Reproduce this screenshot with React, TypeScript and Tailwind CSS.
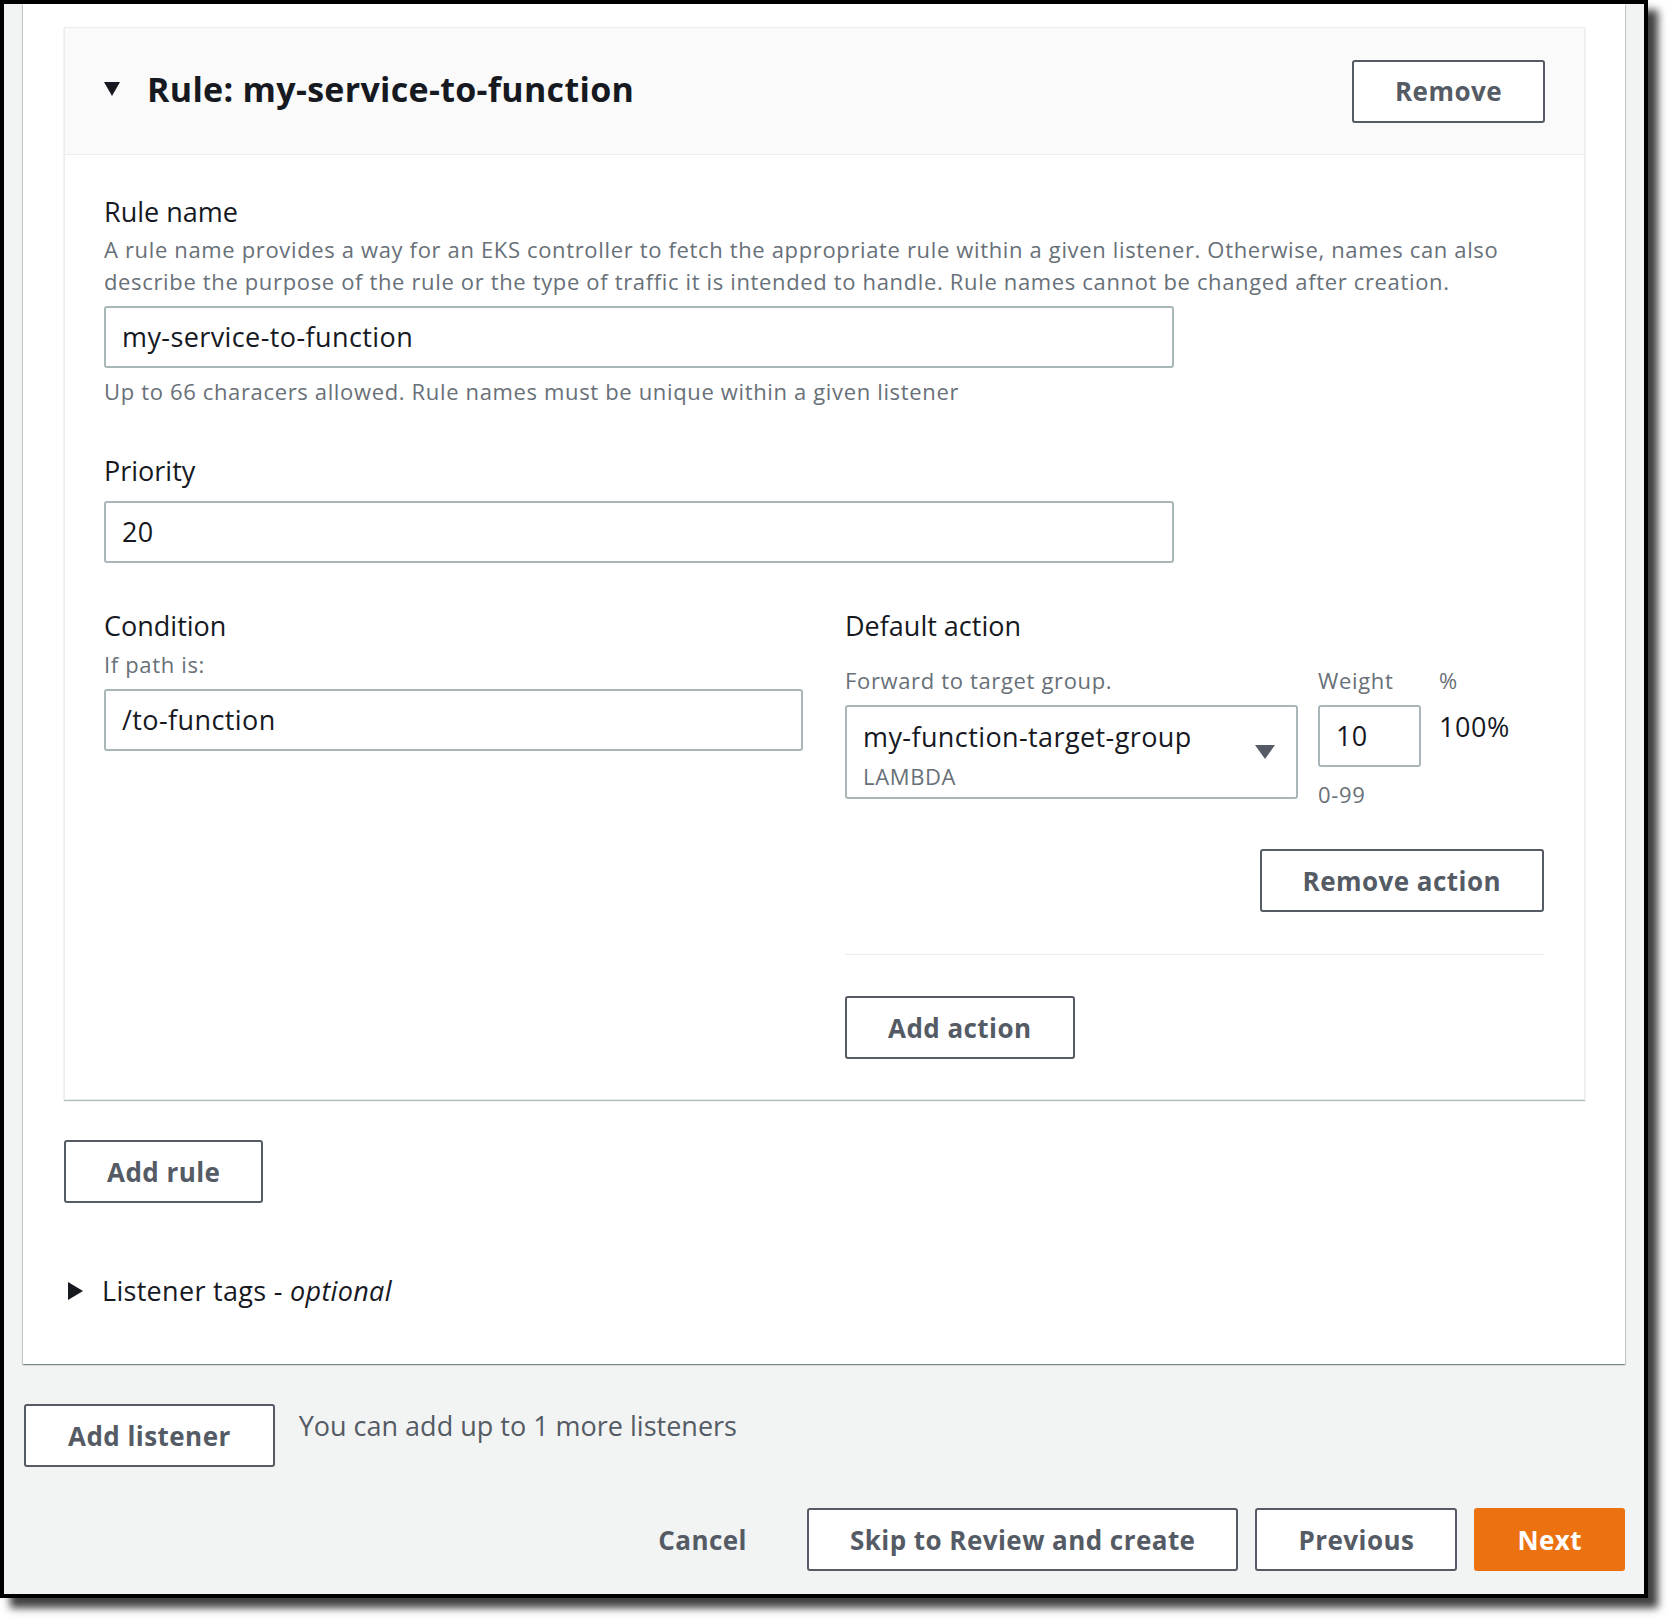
import type { ReactNode } from "react";

type Variant = "normal" | "link" | "primary";

const variants: Record<Variant, string> = {
  normal: "border-[#545b64] bg-white text-[#545b64]",
  link: "border-transparent bg-transparent text-[#545b64]",
  primary: "border-[#ec7211] bg-[#ec7211] text-white",
};

const Button = ({
  children,
  className = "",
  variant = "normal",
}: {
  children: ReactNode;
  className?: string;
  variant?: Variant;
}) => (
  <button
    className={`h-[63px] px-[41px] border-2 rounded-[3px] text-[26px] font-bold tracking-[0.45px] leading-none whitespace-nowrap ${variants[variant]} ${className}`}
  >
    {children}
  </button>
);

const Input = ({ value, className = "" }: { value: string; className?: string }) => (
  <div
    className={`h-[62px] border-2 border-[#aab7b8] rounded-[3px] bg-white flex items-center pl-[16px] text-[27px] tracking-[0.4px] text-[#16191f] ${className}`}
  >
    {value}
  </div>
);

const Label = ({ children }: { children: ReactNode }) => (
  <div className="text-[27px] leading-[36px] text-[#16191f]">{children}</div>
);

const Hint = ({ children, className = "" }: { children: ReactNode; className?: string }) => (
  <div className={`text-[22px] tracking-[0.65px] leading-[32px] text-[#687078] whitespace-nowrap ${className}`}>
    {children}
  </div>
);

export default function App() {
  return (
    <div className="w-[1668px] h-[1618px] bg-white font-['Open_Sans','Noto_Sans',sans-serif]">
      <div className="w-[1648px] h-[1598px] border-4 border-black bg-[#f2f3f3] shadow-[10px_10px_8px_rgba(0,0,0,0.75)] px-[19px] flex flex-col">
        {/* Listener container */}
        <div className="bg-white pt-[23px] pl-[41px] pr-[40px] pb-[55px] shadow-[0_1px_1px_0_rgba(0,28,36,0.3),1px_1px_1px_0_rgba(0,28,36,0.15),-1px_1px_1px_0_rgba(0,28,36,0.15)]">
          {/* Rule card */}
          <div className="border border-[#eaeded] shadow-[0_1px_1px_0_rgba(0,28,36,0.3)]">
            <div className="h-[127px] bg-[#fafafa] border-b border-[#eaeded] flex items-center justify-between pl-[39px] pr-[39px]">
              <div className="flex items-center pb-[4px]">
                <svg width="16" height="14" viewBox="0 0 16 14">
                  <polygon points="0,0 16,0 8,14" fill="#16191f" />
                </svg>
                <span className="ml-[27px] text-[34px] font-bold tracking-[0.3px] leading-[40px] text-[#16191f]">
                  Rule: my-service-to-function
                </span>
              </div>
              <Button>Remove</Button>
            </div>

            <div className="pt-[39px] pb-[40px] px-[39px]">
              <Label>Rule name</Label>
              <Hint className="mt-[3px]">
                A rule name provides a way for an EKS controller to fetch the appropriate rule within a given listener. Otherwise, names can also
                <br />
                describe the purpose of the rule or the type of traffic it is intended to handle. Rule names cannot be changed after creation.
              </Hint>
              <Input value="my-service-to-function" className="mt-[9px] w-[1070px]" />
              <Hint className="mt-[7px]">Up to 66 characers allowed. Rule names must be unique within a given listener</Hint>

              <div className="mt-[46px]">
                <Label>Priority</Label>
              </div>
              <Input value="20" className="mt-[12px] w-[1070px]" />

              <div className="mt-[45px] flex items-start">
                {/* Condition */}
                <div className="w-[699px]">
                  <Label>Condition</Label>
                  <Hint className="mt-[4px]">If path is:</Hint>
                  <Input value="/to-function" className="mt-[9px]" />
                </div>

                {/* Default action */}
                <div className="ml-[42px] w-[699px] flex flex-col">
                  <Label>Default action</Label>
                  <div className="mt-[20px] flex items-start">
                    <div className="w-[453px]">
                      <Hint>Forward to target group.</Hint>
                      <div className="mt-[9px] h-[94px] border-2 border-[#aab7b8] rounded-[3px] flex items-center justify-between pl-[16px] pr-[21px]">
                        <div className="self-start pt-[12px]">
                          <div className="text-[27px] tracking-[0.4px] leading-[36px] text-[#16191f]">
                            my-function-target-group
                          </div>
                          <Hint className="mt-[5px]">LAMBDA</Hint>
                        </div>
                        <svg width="20" height="14" viewBox="0 0 20 14">
                          <polygon points="0,0 20,0 10,14" fill="#545b64" />
                        </svg>
                      </div>
                    </div>
                    <div className="ml-[20px] w-[103px]">
                      <Hint>Weight</Hint>
                      <Input value="10" className="mt-[9px]" />
                      <Hint className="mt-[11px]">0-99</Hint>
                    </div>
                    <div className="ml-[18px]">
                      <Hint>%</Hint>
                      <div className="mt-[13px] text-[27px] tracking-[0.6px] leading-[36px] text-[#16191f]">100%</div>
                    </div>
                  </div>
                  <Button className="mt-[39px] self-end">Remove action</Button>
                  <div className="mt-[42px] h-px bg-[#eaeded]" />
                  <Button className="mt-[41px] self-start">Add action</Button>
                </div>
              </div>
            </div>
          </div>

          <Button className="mt-[40px]">Add rule</Button>

          <div className="mt-[70px] flex items-center">
            <svg className="ml-[4px]" width="15" height="18" viewBox="0 0 15 18">
              <polygon points="0,0 15,9 0,18" fill="#16191f" />
            </svg>
            <span className="ml-[19px] text-[27px] tracking-[0.3px] leading-[36px] text-[#16191f]">
              Listener tags - <i>optional</i>
            </span>
          </div>
        </div>

        <div className="mt-[40px] flex items-start">
          <Button className="ml-[1px] px-[42px]">Add listener</Button>
          <div className="ml-[24px] mt-[4px] text-[27px] leading-[36px] text-[#545b64]">
            You can add up to 1 more listeners
          </div>
        </div>

        <div className="mt-[41px] flex justify-end gap-[17px]">
          <Button variant="link">Cancel</Button>
          <Button>Skip to Review and create</Button>
          <Button>Previous</Button>
          <Button variant="primary">Next</Button>
        </div>
      </div>
    </div>
  );
}
